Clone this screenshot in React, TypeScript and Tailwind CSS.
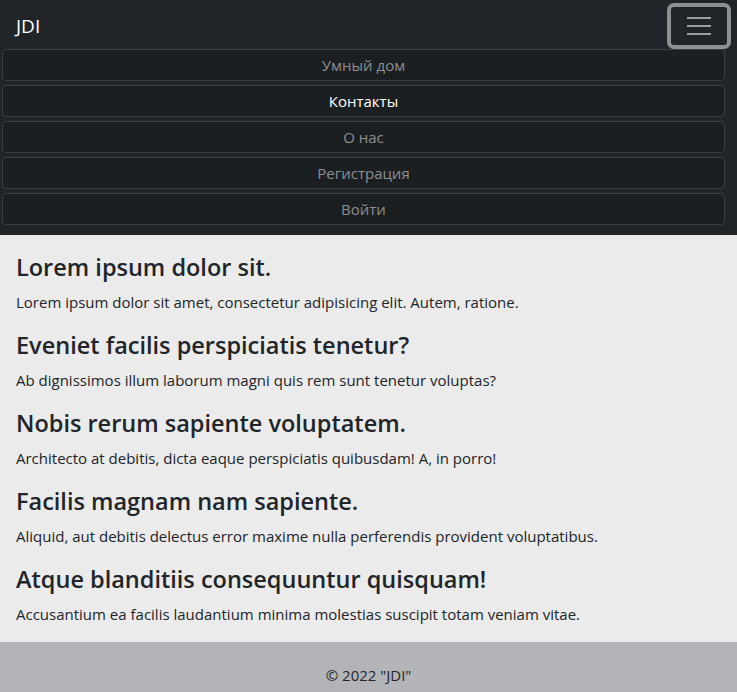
const links = [
  { label: "Умный дом", active: false },
  { label: "Контакты", active: true },
  { label: "О нас", active: false },
  { label: "Регистрация", active: false },
  { label: "Войти", active: false },
];

const sections = [
  {
    title: "Lorem ipsum dolor sit.",
    text: "Lorem ipsum dolor sit amet, consectetur adipisicing elit. Autem, ratione.",
  },
  {
    title: "Eveniet facilis perspiciatis tenetur?",
    text: "Ab dignissimos illum laborum magni quis rem sunt tenetur voluptas?",
  },
  {
    title: "Nobis rerum sapiente voluptatem.",
    text: "Architecto at debitis, dicta eaque perspiciatis quibusdam! A, in porro!",
  },
  {
    title: "Facilis magnam nam sapiente.",
    text: "Aliquid, aut debitis delectus error maxime nulla perferendis provident voluptatibus.",
  },
  {
    title: "Atque blanditiis consequuntur quisquam!",
    text: "Accusantium ea facilis laudantium minima molestias suscipit totam veniam vitae.",
  },
];

export default function App() {
  return (
    <div className="font-['Open_Sans',sans-serif] text-[#212529]">
      <nav className="bg-[#212529] pt-[3px] pb-[10px]">
        <div className="flex items-center justify-between pl-4 pr-[6px] h-[46px]">
          <a href="#" className="text-white text-[19px] leading-none">
            JDI
          </a>
          <button className="w-[64px] h-[46px] rounded-[7px] border-4 border-[#8e8f91] flex flex-col items-center justify-center gap-[6px]">
            <span className="block w-[24px] h-[2px] bg-[#9c9d9f]" />
            <span className="block w-[24px] h-[2px] bg-[#9c9d9f]" />
            <span className="block w-[24px] h-[2px] bg-[#9c9d9f]" />
          </button>
        </div>
        <ul className="flex flex-col gap-[4px] pl-[2px] pr-[12px]">
          {links.map((l) => (
            <li key={l.label}>
              <a
                href="#"
                className={`flex h-[32px] items-center justify-center rounded-[4px] border border-[#3d4043] bg-[#1c1f22] text-[15px] ${
                  l.active ? "text-white" : "text-[#8c8e90]"
                }`}
              >
                {l.label}
              </a>
            </li>
          ))}
        </ul>
      </nav>
      <main className="bg-[#ebebeb] px-4 pt-[17px]">
        {sections.map((s) => (
          <section key={s.title} className="pb-4">
            <h3 className="text-[23.5px] leading-[30px] font-semibold mb-2">{s.title}</h3>
            <p className="text-[15px] leading-6">{s.text}</p>
          </section>
        ))}
      </main>
      <footer className="bg-[#b3b4b8] text-center pt-[21px] pb-[21px] text-[15px] leading-6">
        © 2022 "JDI"
      </footer>
    </div>
  );
}
